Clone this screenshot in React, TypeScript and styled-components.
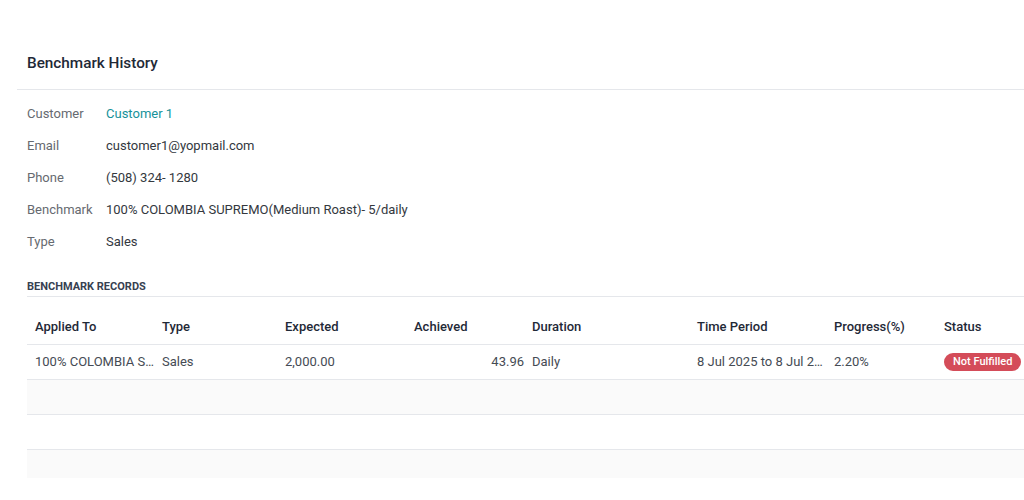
import React from "react";
import styled, { createGlobalStyle } from "styled-components";

const GlobalStyle = createGlobalStyle`
  html, body {
    margin: 0;
    padding: 0;
    background: #ffffff;
    overflow: hidden;
  }
  body {
    font-family: Roboto, "Liberation Sans", Arial, sans-serif;
    color: #374151;
  }
`;

const Dialog = styled.div`
  width: 1160px;
  margin-left: 17px;
  padding-top: 40px;
`;

const Header = styled.header`
  height: 50px;
  box-sizing: border-box;
  padding: 0 0 4px 10px;
  display: flex;
  align-items: center;
  border-bottom: 1px solid #e5e7eb;
`;

const Title = styled.h4`
  margin: 0;
  font-size: 15.3px;
  font-weight: 500;
  color: #1f2937;
`;

const Body = styled.div`
  padding: 7px 0 0 10px;
`;

const Fields = styled.div`
  display: grid;
  grid-template-columns: 79px auto;
  grid-auto-rows: 32px;
  align-items: center;
`;

const Label = styled.div`
  font-size: 13px;
  color: #666a70;
`;

const Value = styled.div<{ $link?: boolean }>`
  font-size: 13px;
  color: ${(p) => (p.$link ? "#17929a" : "#33383e")};
`;

const SectionTitle = styled.h5`
  margin: 23px 0 0;
  padding-bottom: 3px;
  font-size: 11px;
  font-weight: 700;
  text-transform: uppercase;
  color: #374151;
  border-bottom: 1px solid #e5e7eb;
`;

const Table = styled.table`
  margin-top: 12px;
  width: 1133px;
  table-layout: fixed;
  border-collapse: collapse;
  font-size: 13px;
`;

const Th = styled.th<{ $w: number }>`
  box-sizing: border-box;
  width: ${(p) => p.$w}px;
  height: 35px;
  padding: 0 4px;
  text-align: left;
  font-weight: 500;
  color: #1f2937;
  border-bottom: 1px solid #e5e7eb;
  &:first-child {
    padding-left: 8px;
  }
`;

const Row = styled.tr<{ $striped?: boolean; $clipped?: boolean }>`
  height: ${(p) => (p.$clipped ? "29px" : "35px")};
  background: ${(p) => (p.$striped ? "#fafafa" : "#ffffff")};
  border-bottom: ${(p) => (p.$clipped ? "none" : "1px solid #e5e7eb")};
`;

const Td = styled.td<{ $right?: boolean }>`
  padding: 0 4px;
  color: #454b54;
  text-align: ${(p) => (p.$right ? "right" : "left")};
  white-space: nowrap;
  overflow: hidden;
  text-overflow: ellipsis;
  &:first-child {
    padding-left: 8px;
  }
`;

const Badge = styled.span`
  display: inline-block;
  padding: 2px 9px;
  border-radius: 10px;
  background: #d44c59;
  color: #ffffff;
  font-size: 11px;
  font-weight: 500;
  line-height: 14px;
`;

const fields = [
  { label: "Customer", value: "Customer 1", link: true },
  { label: "Email", value: "customer1@yopmail.com" },
  { label: "Phone", value: "(508) 324- 1280" },
  { label: "Benchmark", value: "100% COLOMBIA SUPREMO(Medium Roast)- 5/daily" },
  { label: "Type", value: "Sales" },
];

const columns = [
  { title: "Applied To", w: 131 },
  { title: "Type", w: 123 },
  { title: "Expected", w: 129 },
  { title: "Achieved", w: 118 },
  { title: "Duration", w: 165 },
  { title: "Time Period", w: 137 },
  { title: "Progress(%)", w: 110 },
  { title: "Status", w: 220 },
];

export default function App() {
  return (
    <>
      <GlobalStyle />
      <Dialog>
        <Header>
          <Title>Benchmark History</Title>
        </Header>
        <Body>
          <Fields>
            {fields.map((f) => (
              <React.Fragment key={f.label}>
                <Label>{f.label}</Label>
                <Value $link={f.link}>{f.value}</Value>
              </React.Fragment>
            ))}
          </Fields>
          <SectionTitle>Benchmark Records</SectionTitle>
          <Table>
            <thead>
              <tr>
                {columns.map((c) => (
                  <Th key={c.title} $w={c.w}>
                    {c.title}
                  </Th>
                ))}
              </tr>
            </thead>
            <tbody>
              <Row>
                <Td>100% COLOMBIA SUPREMO(Medium Roast)</Td>
                <Td>Sales</Td>
                <Td>2,000.00</Td>
                <Td $right>43.96</Td>
                <Td>Daily</Td>
                <Td>8 Jul 2025 to 8 Jul 2025</Td>
                <Td>2.20%</Td>
                <Td>
                  <Badge>Not Fulfilled</Badge>
                </Td>
              </Row>
              <Row $striped>
                <td colSpan={8} />
              </Row>
              <Row>
                <td colSpan={8} />
              </Row>
              <Row $striped $clipped>
                <td colSpan={8} />
              </Row>
            </tbody>
          </Table>
        </Body>
      </Dialog>
    </>
  );
}
